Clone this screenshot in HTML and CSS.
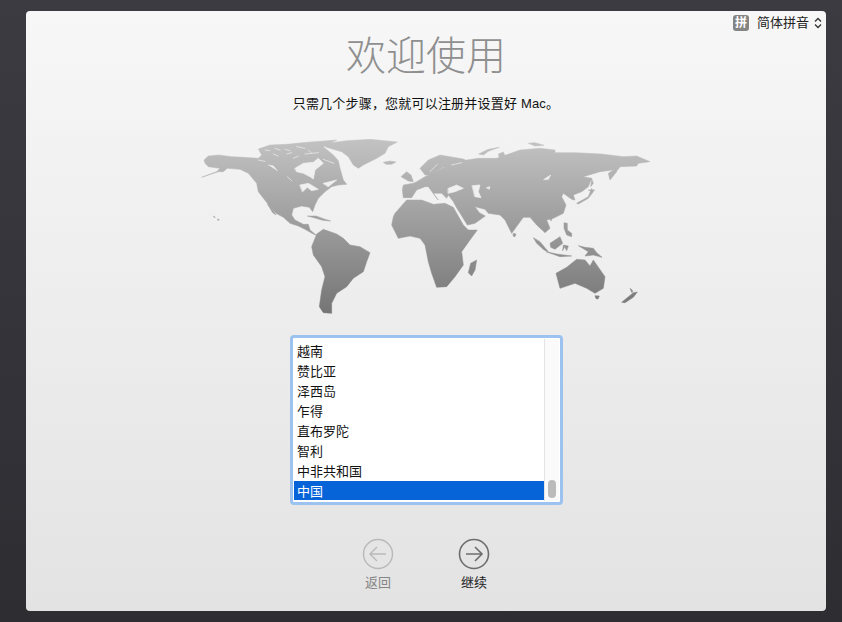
FILE: index.html
```html
<!DOCTYPE html>
<html lang="zh-CN">
<head>
<meta charset="utf-8">
<title>欢迎使用</title>
<link rel="stylesheet" href="styles.css">
</head>
<body>
<main class="card">
  <div class="input-menu">
    <span class="input-badge">拼</span>
    <span class="input-name">简体拼音</span>
    <svg class="updown" width="8" height="12" viewBox="0 0 8 12"><path d="M1 4.5 4 1.5 7 4.5M1 7.5 4 10.5 7 7.5" fill="none" stroke="#333" stroke-width="1.3"/></svg>
  </div>
  <h1 class="title">欢迎使用</h1>
  <p class="subtitle">只需几个步骤，您就可以注册并设置好 Mac。</p>
  <svg class="map" width="460" height="180" viewBox="0 0 1380 540">
    <defs>
      <linearGradient id="land" gradientUnits="userSpaceOnUse" x1="0" y1="30" x2="0" y2="550">
        <stop offset="0" stop-color="#c2c2c2"/>
        <stop offset="1" stop-color="#757575"/>
      </linearGradient>
    </defs>
    <g transform="translate(-30 -15)">
      <g class="land">
        <path d="M42,90 L55,78 L85,75 L125,80 L160,82 L205,85 L215,75 L205,57 L240,45 L290,43 L350,37 L440,30 L400,50 L430,75 L445,92 L450,115 L460,150 L470,163 L445,165 L425,170 L405,185 L385,205 L375,225 L368,245 L358,232 L335,228 L310,235 L305,255 L315,270 L340,283 L355,283 L360,300 L378,315 L370,312 L345,298 L325,288 L300,280 L280,262 L258,250 L232,220 L205,185 L200,160 L175,130 L150,118 L112,115 L100,125 L85,125 L35,142 L80,125 L90,115 L55,110 L45,100 Z"/>
        <path d="M232,222 L240,225 L258,255 L248,248 Z"/>
        <path d="M395,42 L470,32 L540,28 L622,36 L595,50 L585,70 L560,85 L520,105 L505,115 L490,105 L475,80 L455,65 L410,52 Z"/>
        <path d="M580,97 L600,93 L618,96 L605,103 L588,103 Z"/>
        <path d="M352,258 L378,258 L400,266 L422,273 L398,271 L375,264 Z"/>
        <path d="M70,258 L76,262 L72,262 Z"/>
        <path d="M84,266 L88,270 L83,271 Z"/>
        <path d="M380,312 L400,298 L440,312 L460,325 L480,345 L510,350 L540,368 L530,395 L520,425 L490,445 L470,470 L440,490 L425,520 L425,550 L400,548 L388,530 L395,480 L405,440 L395,410 L370,375 L365,350 Z"/>
      </g>
      <g class="sea">
        <path d="M315,115 L340,100 L370,97 L385,85 L400,100 L375,120 L370,147 L360,140 L340,130 L320,125 Z"/>
        <path d="M225,60 L240,62M255,55 L270,60M285,58 L300,62M250,72 L265,78M290,72 L305,68M320,50 L345,55M355,60 L365,70M310,85 L325,78M345,72 L385,68M205,90 L225,94M235,105 L250,108 L262,122M292,140 L305,152M400,88 L432,100"/>
        <path d="M330,165 L355,160 L385,178 L365,182 L352,172 L338,185 Z"/>
        <path d="M400,160 L440,150 L415,170 Z"/>
      </g>
      <g transform="translate(690 0)">
        <g class="land">
          <path d="M-85,285 L-80,260 L-75,250 L-40,210 L5,210 L40,223 L75,220 L100,232 L130,285 L145,300 L172,300 L150,330 L125,365 L130,405 L105,440 L80,470 L50,472 L35,430 L25,395 L15,345 L0,325 L-30,318 L-65,325 Z"/>
          <path d="M-53,180 L-50,165 L-20,160 L-10,155 L15,140 L55,120 L90,105 L140,90 L175,85 L230,85 L300,60 L360,55 L405,60 L405,68 L465,68 L505,70 L545,72 L610,80 L650,78 L690,95 L655,100 L650,108 L600,110 L595,118 L540,125 L490,140 L515,145 L505,170 L485,185 L460,195 L465,210 L455,208 L430,190 L425,200 L438,225 L430,250 L400,265 L380,270 L390,295 L375,308 L350,285 L330,262 L310,262 L275,310 L255,270 L240,255 L205,250 L195,238 L165,230 L178,248 L196,258 L165,280 L142,285 L108,230 L100,215 L85,195 L80,205 L65,190 L40,190 L55,210 L50,205 L25,170 L15,170 L-10,180 L-25,203 L-50,203 Z"/>
          <path d="M0,115 L25,90 L60,75 L130,87 L140,92 L100,112 L70,112 L45,125 L30,135 L15,135 Z"/>
          <path d="M-57,140 L-40,125 L-27,135 L-20,155 L-35,153 Z"/>
          <path d="M176,72 L205,58 L238,52 L205,64 L190,75 Z"/>
          <path d="M235,72 L250,66 L260,88 L240,90 Z"/>
          <path d="M325,40 L345,38 L372,46 L345,48 Z"/>
          <path d="M565,130 L595,110 L590,125 L570,150 Z"/>
          <path d="M515,145 L520,160 L512,170 Z"/>
          <path d="M505,180 L525,180 L515,185 Z"/>
          <path d="M470,220 L505,200 L515,175 L520,185 L505,205 L475,222 Z"/>
          <path d="M390,266 L396,266 L393,273 Z"/>
          <path d="M280,310 L288,312 L285,320 L279,318 Z"/>
          <path d="M432,278 L442,280 L442,300 L455,310 L455,320 L440,315 L432,295 Z"/>
          <path d="M340,323 L360,335 L385,365 L372,360 L350,340 Z"/>
          <path d="M378,365 L410,372 L455,378 L420,380 Z"/>
          <path d="M390,340 L420,320 L428,340 L405,358 L392,352 Z"/>
          <path d="M430,345 L445,348 L440,362 L434,350 L428,362 Z"/>
          <path d="M475,347 L495,352 L520,355 L530,368 L546,382 L520,375 L495,378 L505,365 Z"/>
          <path d="M145,428 L152,400 L170,390 L165,420 L155,438 Z"/>
          <path d="M408,430 L440,412 L470,388 L495,390 L510,408 L520,390 L555,440 L550,475 L525,490 L500,475 L465,460 L420,475 Z"/>
          <path d="M525,497 L538,498 L534,507 L528,506 Z"/>
          <path d="M605,517 L628,498 L640,488 L652,486 L640,502 L615,518 Z"/>
          <path d="M630,475 L638,482 L636,488 Z"/>
        </g>
        <g class="sea">
          <path d="M85,175 L110,165 L130,175 L105,185 L85,190 Z"/>
          <path d="M157,167 L180,165 L175,185 L183,203 L165,200 Z"/>
          <path d="M200,173 L210,170 L208,177 Z"/>
          <path d="M372,148 L392,135 L385,148 Z"/>
          <path d="M52,103 L30,125"/>
          <path d="M95,105 L125,98"/>
        </g>
      </g>
    </g>
  </svg>
  <div class="list-box">
    <ul class="list">
      <li class="item">越南</li>
      <li class="item">赞比亚</li>
      <li class="item">泽西岛</li>
      <li class="item">乍得</li>
      <li class="item">直布罗陀</li>
      <li class="item">智利</li>
      <li class="item">中非共和国</li>
      <li class="item selected">中国</li>
    </ul>
    <div class="scroll"><span class="thumb"></span></div>
  </div>
  <div class="nav">
    <div class="nav-btn back">
      <svg width="32" height="32" viewBox="0 0 32 32"><circle cx="16" cy="16" r="14.5" fill="none" stroke="currentColor" stroke-width="1.4"/><path d="M24 16H8M15 9 8 16 15 23" fill="none" stroke="currentColor" stroke-width="1.4"/></svg>
      <span class="nav-label">返回</span>
    </div>
    <div class="nav-btn next">
      <svg width="32" height="32" viewBox="0 0 32 32"><circle cx="16" cy="16" r="14.5" fill="none" stroke="currentColor" stroke-width="1.6"/><path d="M8 16H24M17 9 24 16 17 23" fill="none" stroke="currentColor" stroke-width="1.6"/></svg>
      <span class="nav-label">继续</span>
    </div>
  </div>
</main>
</body>
</html>
```
FILE: styles.css
```css
* { box-sizing: border-box; }
html, body { height: 100%; }
body {
  margin: 0;
  padding: 11px 16px 11px 26px;
  background: linear-gradient(#3b3b41, #2d2d32);
  font-family: "Liberation Sans", "Noto Sans CJK SC", sans-serif;
  overflow: hidden;
}
.card {
  position: relative;
  height: 600px;
  border-radius: 4px;
  background: linear-gradient(#f7f7f7, #e3e3e3);
  display: flex;
  flex-direction: column;
  align-items: center;
}
.input-menu {
  position: absolute;
  top: 4px;
  right: 4px;
  display: flex;
  align-items: center;
  height: 16px;
}
.input-badge {
  width: 16px;
  height: 16px;
  border-radius: 3px;
  background: #858585;
  color: #fff;
  font-size: 12px;
  font-weight: 700;
  line-height: 16px;
  text-align: center;
}
.input-name {
  margin: 0 5px 0 8px;
  font-size: 13px;
  line-height: 16px;
  color: #222;
}
.title {
  margin: 18px 0 0;
  font-size: 40px;
  line-height: 54px;
  font-weight: 300;
  color: #8f8f8f;
}
.subtitle {
  margin: 12px 0 0;
  font-size: 13px;
  line-height: 18px;
  letter-spacing: .2px;
  color: #111;
}
.map {
  display: block;
  margin: 22px 0 0 8px;
  filter: blur(.4px);
}
.land {
  fill: url(#land);
  stroke: url(#land);
  stroke-width: 1.5;
  stroke-linejoin: round;
}
.sea {
  fill: #f0f0f0;
  stroke: #f0f0f0;
  stroke-width: 2;
  stroke-linejoin: round;
  stroke-linecap: round;
}
.list-box {
  margin: 20px 0 0 1px;
  width: 273px;
  height: 170px;
  border: 3px solid #9cc3f0;
  border-radius: 4px;
  background: #fff;
  padding: 1px;
  display: flex;
}
.list {
  flex: 1;
  margin: 0;
  padding: 2px 0 0;
  list-style: none;
  overflow: hidden;
}
.item {
  height: 20px;
  padding: 1px 0 0 3px;
  font-size: 13px;
  line-height: 20px;
  color: #111;
}
.selected {
  height: 19px;
  background: #0764d8;
  color: #fff;
}
.scroll {
  flex: none;
  width: 15px;
  background: #fafafa;
  border-left: 1px solid #e4e4e4;
  display: flex;
  align-items: flex-end;
  justify-content: center;
  padding-bottom: 3px;
}
.thumb {
  width: 8px;
  height: 18px;
  border-radius: 4px;
  background: #bbb;
}
.nav {
  margin-top: 33px;
  display: flex;
  gap: 64px;
}
.nav-btn {
  width: 32px;
  display: flex;
  flex-direction: column;
  align-items: center;
}
.back { color: #b9b9b9; }
.next { color: #6d6d6d; }
.nav-label {
  margin-top: 3px;
  white-space: nowrap;
  font-size: 13px;
  line-height: 20px;
}
.back .nav-label { color: #858585; }
.next .nav-label { color: #222; }
```
